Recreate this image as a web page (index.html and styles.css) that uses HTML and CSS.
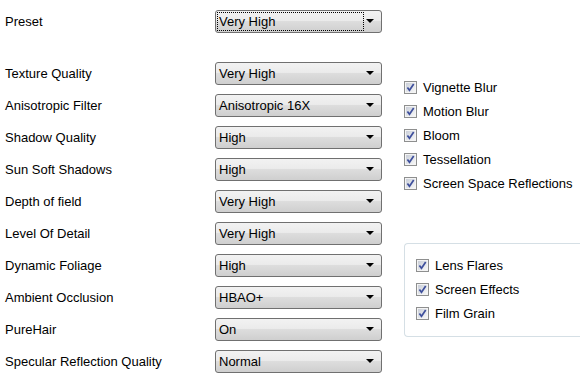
FILE: index.html
```html
<!DOCTYPE html>
<html lang="en">
<head>
    <meta charset="UTF-8">
    <title>Graphics Settings</title>
    <link rel="stylesheet" href="styles.css">
</head>
<body>
    <svg width="0" height="0" class="defs">
        <defs>
            <linearGradient id="g" x1="0" y1="0" x2="1" y2="1">
                <stop offset="0" stop-color="#c9ced8"/>
                <stop offset="1" stop-color="#f7f7f7"/>
            </linearGradient>
            <symbol id="tick" viewBox="0 0 13 13">
                <rect x="0" y="0" width="13" height="13" fill="#8e8f8f"/>
                <rect x="1" y="1" width="11" height="11" fill="#f4f4f4"/>
                <rect x="2" y="2" width="9" height="9" fill="url(#g)"/>
                <path d="M3.4 6.4 L5.5 9.3 L9.7 3.1" fill="none" stroke="#3e4f9c" stroke-width="1.7"/>
            </symbol>
        </defs>
    </svg>
    <div class="panel">
        <div class="settings">
            <div class="row preset">
                <span class="label">Preset</span>
                <div class="combo focused"><span class="value">Very High</span><span class="arrow"></span></div>
            </div>
            <div class="row">
                <span class="label">Texture Quality</span>
                <div class="combo"><span class="value">Very High</span><span class="arrow"></span></div>
            </div>
            <div class="row">
                <span class="label">Anisotropic Filter</span>
                <div class="combo"><span class="value">Anisotropic 16X</span><span class="arrow"></span></div>
            </div>
            <div class="row">
                <span class="label">Shadow Quality</span>
                <div class="combo"><span class="value">High</span><span class="arrow"></span></div>
            </div>
            <div class="row">
                <span class="label">Sun Soft Shadows</span>
                <div class="combo"><span class="value">High</span><span class="arrow"></span></div>
            </div>
            <div class="row">
                <span class="label">Depth of field</span>
                <div class="combo"><span class="value">Very High</span><span class="arrow"></span></div>
            </div>
            <div class="row">
                <span class="label">Level Of Detail</span>
                <div class="combo"><span class="value">Very High</span><span class="arrow"></span></div>
            </div>
            <div class="row">
                <span class="label">Dynamic Foliage</span>
                <div class="combo"><span class="value">High</span><span class="arrow"></span></div>
            </div>
            <div class="row">
                <span class="label">Ambient Occlusion</span>
                <div class="combo"><span class="value">HBAO+</span><span class="arrow"></span></div>
            </div>
            <div class="row">
                <span class="label">PureHair</span>
                <div class="combo"><span class="value">On</span><span class="arrow"></span></div>
            </div>
            <div class="row">
                <span class="label">Specular Reflection Quality</span>
                <div class="combo"><span class="value">Normal</span><span class="arrow"></span></div>
            </div>
        </div>

        <div class="effects">
            <div class="checks">
                <label class="check"><svg class="box"><use href="#tick"/></svg>Vignette Blur</label>
                <label class="check"><svg class="box"><use href="#tick"/></svg>Motion Blur</label>
                <label class="check"><svg class="box"><use href="#tick"/></svg>Bloom</label>
                <label class="check"><svg class="box"><use href="#tick"/></svg>Tessellation</label>
                <label class="check"><svg class="box"><use href="#tick"/></svg>Screen Space Reflections</label>
            </div>
            <div class="group">
                <label class="check"><svg class="box"><use href="#tick"/></svg>Lens Flares</label>
                <label class="check"><svg class="box"><use href="#tick"/></svg>Screen Effects</label>
                <label class="check"><svg class="box"><use href="#tick"/></svg>Film Grain</label>
            </div>
        </div>
    </div>
</body>
</html>
```

FILE: styles.css
```css
body, html {
    margin: 0;
    padding: 0;
    background: #ffffff;
    color: #000000;
    font-family: 'Liberation Sans', Arial, sans-serif;
    font-size: 13px;
    overflow: hidden;
}

.defs {
    position: absolute;
}

.panel {
    display: flex;
    width: 580px;
    height: 380px;
}

.settings {
    padding: 5px 0 0 5px;
    width: 377px;
    flex-shrink: 0;
}

.row {
    display: grid;
    grid-template-columns: 210px 167px;
    height: 32px;
    align-items: center;
}

.row.preset {
    margin-bottom: 20px;
}

.combo {
    height: 21px;
    border: 1px solid #707070;
    border-radius: 3px;
    background: linear-gradient(#f2f2f2 0%, #ebebeb 45%, #dddddd 50%, #cfcfcf 100%);
    display: flex;
    align-items: center;
    padding: 0 7px 0 3px;
    position: relative;
}

.combo .value {
    flex: 1;
}

.combo .arrow {
    width: 0;
    height: 0;
    border-left: 4px solid transparent;
    border-right: 4px solid transparent;
    border-top: 4px solid #000000;
}

.combo.focused::after {
    content: '';
    position: absolute;
    left: 1px;
    top: 1px;
    width: 145px;
    height: 17px;
    border: 1px dotted #000000;
}

.effects {
    margin-left: 22px;
    padding-top: 75px;
    flex: 1;
    min-width: 0;
}

.check {
    display: flex;
    align-items: center;
    height: 24px;
    white-space: nowrap;
}

.check .box {
    width: 13px;
    height: 13px;
    margin-right: 6px;
    flex-shrink: 0;
}

.group {
    margin-top: 48px;
    border: 1px solid #d5dfe5;
    border-right: none;
    border-radius: 4px 0 0 4px;
    padding: 9px 0 11px 11px;
}
```
